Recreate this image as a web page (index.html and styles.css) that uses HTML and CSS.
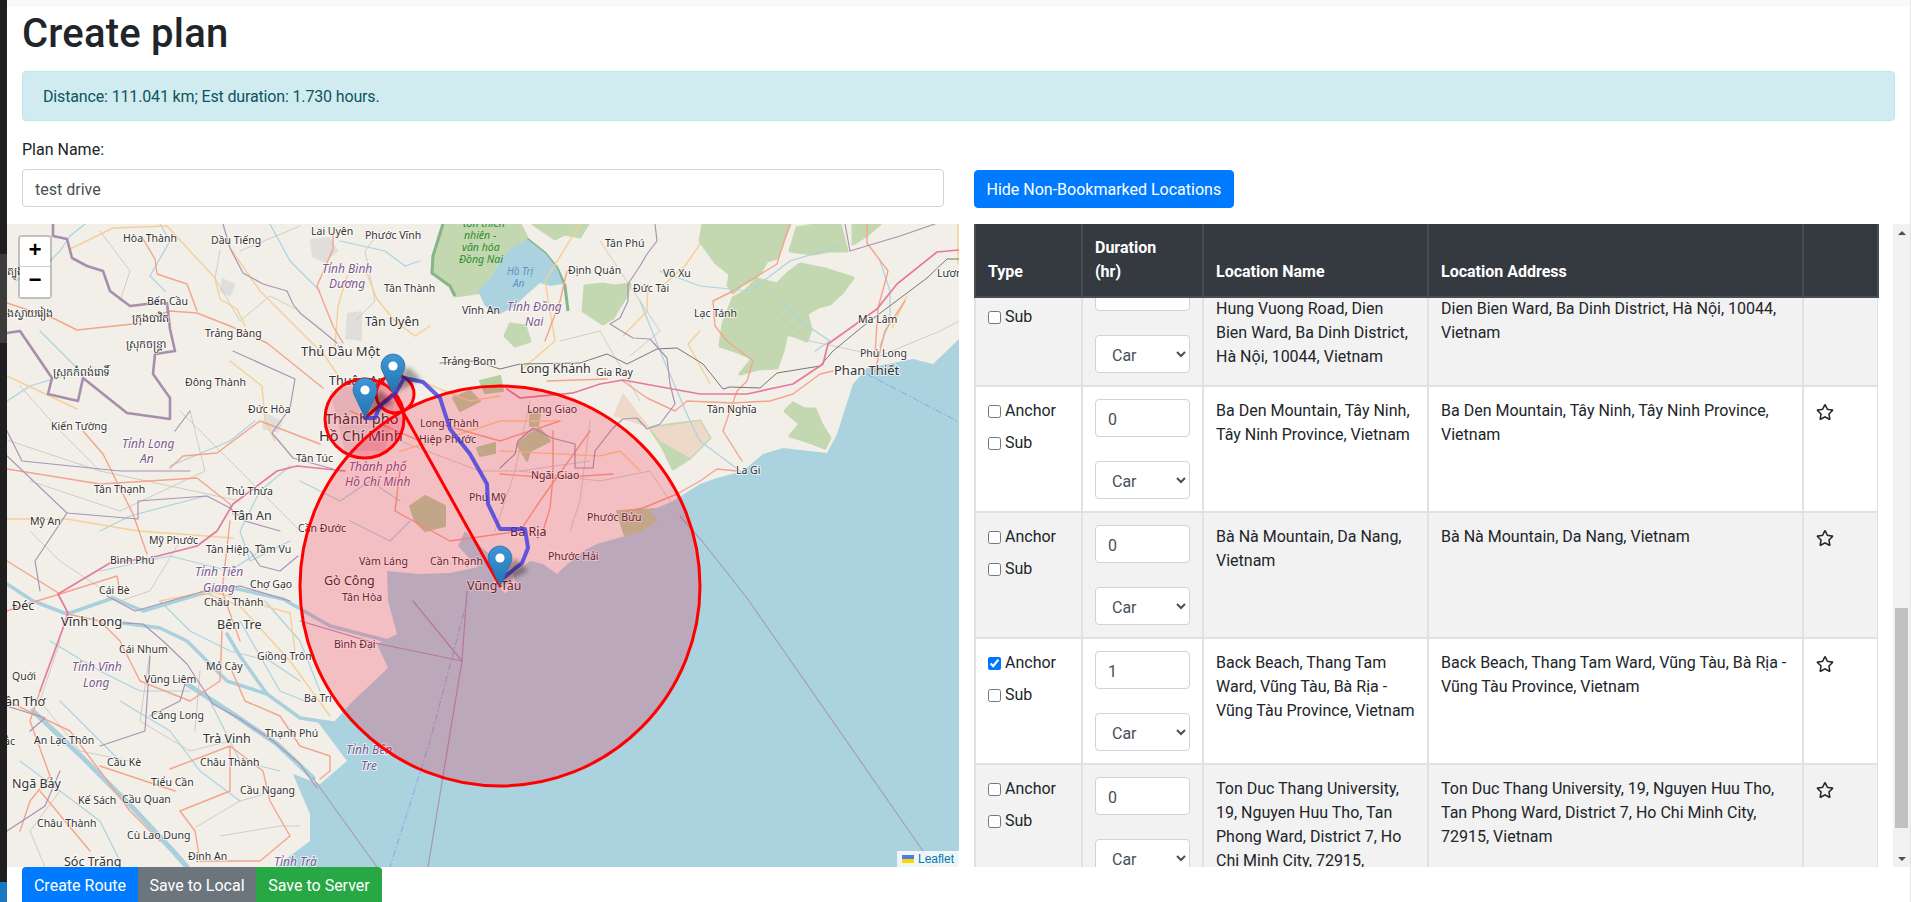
FILE: index.html
```html
<!DOCTYPE html>
<html lang="en">
<head>
<meta charset="utf-8">
<title>Create plan</title>
<link rel="stylesheet" href="styles.css">
</head>
<body>
<div class="app">
  <div class="edge">
    <div class="edge-a"></div>
    <div class="edge-b"></div>
    <div class="edge-c"></div>
    <div class="edge-d"></div>
  </div>
  <main class="page">
    <div class="topbar"></div>
    <section class="intro">
      <h1>Create plan</h1>
      <div class="alert">Distance: 111.041 km; Est duration: 1.730 hours.</div>
    </section>
    <section class="form-row">
      <div class="name-col">
        <label class="name-label" for="plan">Plan Name:</label>
        <input id="plan" class="control" type="text" value="test drive">
      </div>
      <div class="hide-col">
        <button class="btn btn-primary" type="button">Hide Non-Bookmarked Locations</button>
      </div>
    </section>
    <section class="work">
      <div class="map">
        <svg class="map-svg" viewBox="7 223 952 643" aria-label="Map">
          <defs>
            <linearGradient id="pin" x1="0" y1="0" x2="0" y2="1">
              <stop offset="0" stop-color="#3f97d6"/>
              <stop offset="1" stop-color="#2273b2"/>
            </linearGradient>
            <g id="marker">
              <path class="pin-body" d="M12.5 .6C5.9 .6 .6 5.9 .6 12.5c0 2.4 .8 4.6 1.9 6.5L12.5 40.4 22.5 19c1.1-1.9 1.9-4.1 1.9-6.5C24.4 5.9 19.1 .6 12.5 .6z"/>
              <circle class="pin-dot" cx="12.5" cy="12.5" r="4.6"/>
            </g>
          </defs>

          <rect class="land" x="7" y="223" width="952" height="643"/>

          <path class="forest" d="M703 223L790 223 784 238 777 257 767 260 760 272 753 278 742 284 733 292 728 284 730 273 716 262 700 240z"/>
          <path class="forest" d="M723 323L728 310 733 297 745 290 757 278 777 283 788 272 800 263 825 268 853 277 842 292 830 303 818 306 807 313 811 328 807 340 797 336 787 333 783 350 777 367 758 368 740 373 753 357 735 350 720 345z"/>
          <path class="forest" d="M797 227L820 223 840 223 847 250 830 250 813 253 790 250z"/>
          <path class="forest" d="M853 223L880 223 866 235 853 243z"/>
          <path class="forest" d="M533 223L588 223 580 236 565 233 555 238z"/>
          <path class="forest" d="M585 285L583 310 603 323 613 317 620 305 627 295 630 283 615 285 603 283z"/>
          <path class="forest" d="M785 410L793 402 805 408 815 408 822 424 830 437 825 447 812 442 800 438 790 435 800 423z"/>
          <path class="forest" d="M650 427L675 423 700 420 710 437 690 457 673 468 663 447z"/>
          <path class="forest" d="M443 223L433 255 432 272 450 285 455 295 490 290 495 265 507 250 527 237 520 223z"/>
          <path class="forest" d="M510 323L525 325 530 340 515 345 505 335z"/>
          <path class="forest-edge" d="M443 223L433 255 432 272 450 285 455 295"/>
          <path class="forest-edge" d="M527 238L545 252 557 267 565 285 568 310"/>
          <path class="hatch" d="M623 392L613 415 650 427 700 420 710 437 690 457 660 440z"/>
          <path class="lake" d="M527 238L545 252 557 267 563 283 550 285 540 282 525 295 515 305 500 313 485 305 478 290 490 278 500 260 510 248z"/>

          <path class="urban" d="M310 238L330 236 338 250 325 262 312 256z"/>
          <path class="urban" d="M222 277L236 283 230 296 220 290z"/>
          <path class="urban" d="M347 312L362 310 362 340 345 338z"/>
          <path class="urban" d="M265 412L283 420 278 432 262 428z"/>
          <path class="urban" d="M330 390L370 380 395 400 385 450 345 450z"/>

          <path class="scrub" d="M453 397L470 390 480 400 460 410z"/>
          <path class="scrub" d="M517 443L530 433 540 428 550 440 530 450 527 460z"/>
          <path class="scrub" d="M477 447L495 442 495 452 480 455z"/>
          <path class="scrub" d="M617 510L660 508 657 530 640 540 625 535z"/>
          <path class="scrub" d="M530 410L540 412 538 425 530 425z"/>
          <path class="scrub" d="M480 380L500 375 503 390 485 392z"/>
          <path class="scrub" d="M410 505L425 495 445 505 445 525 425 530 415 520z"/>

          <path class="sea" d="M959 338L933 363 913 358 867 367 853 383 837 433 827 452 783 447 763 453 743 470 717 477 700 483 673 500 650 510 657 520 643 530 597 543 583 550 563 567 557 573 543 563 530 560 513 573 517 585 505 592 495 582 492 555 480 545 465 530 458 545 470 558 478 566 450 572 420 573 387 570 388 600 397 633 377 643 388 667 353 700 333 722 317 720 347 760 320 783 293 773 300 790 310 813 310 840 283 860 277 866 959 866z"/>

          <path class="w-thick" d="M7 583L33 600 67 613 113 597 143 610 200 593 233 587 283 598 330 625 388 640"/>
          <path class="w-thick" d="M123 622L160 627 187 640 227 680 267 693 300 717 333 722"/>
          <path class="w-wide" d="M33 710L83 757 133 807 173 850 187 866"/>
          <path class="w-wide" d="M187 683L233 713 277 743 313 777"/>
          <path class="w-thick" d="M227 633L240 655 267 693"/>

          <path class="water" d="M85 223L70 235 60 250 40 270 15 280"/>
          <path class="water" d="M160 223L170 240 150 275 165 290"/>
          <path class="water" d="M270 223L290 260 315 285 320 290"/>
          <path class="water" d="M340 240L385 250 405 265 420 260"/>
          <path class="water" d="M40 330L80 370 30 385 7 400"/>
          <path class="water" d="M170 465L230 440 255 420"/>
          <path class="water" d="M205 495L130 515 100 530"/>
          <path class="water" d="M290 465L260 490 240 530 250 560 290 540"/>
          <path class="water" d="M100 570L170 555 230 570 260 550"/>
          <path class="water" d="M160 600L190 630 230 650 270 660 300 680"/>
          <path class="water" d="M50 640L100 670 140 690 190 690"/>
          <path class="water" d="M120 700L170 730 200 770 240 800"/>
          <path class="water" d="M20 760L60 790 100 820 120 860"/>
          <path class="water" d="M640 300L660 350 690 420 700 440 740 470"/>
          <path class="water" d="M780 300L800 320 830 340 815 350"/>
          <path class="water" d="M660 270L700 285 750 290 790 260 840 245"/>
          <path class="water" d="M880 260L890 290 890 320 880 345"/>
          <path class="water" d="M265 600L300 640 320 690"/>
          <path class="water" d="M240 620L280 690 305 700"/>
          <path class="water" d="M210 700L240 760 280 770"/>
          <path class="water" d="M60 700L120 760"/>
          <path class="water" d="M300 480L340 500 370 480 400 500"/>
          <path class="water" d="M350 520L390 540 410 520"/>

          <path class="minor" d="M7 439L100 470 240 500"/>
          <path class="minor" d="M30 480L120 510 205 470 190 410"/>
          <path class="minor" d="M180 410L240 470 300 530"/>
          <path class="minor" d="M20 385L60 430 100 470"/>
          <path class="minor" d="M240 250L300 225"/>
          <path class="minor" d="M220 250L215 277 240 320 270 295 300 310"/>
          <path class="minor" d="M100 230L130 270 120 300"/>
          <path class="minor" d="M380 230L365 250 375 300 355 320"/>
          <path class="minor" d="M180 540L150 590 120 600 60 560 30 530"/>
          <path class="minor" d="M60 640L40 700 80 750 130 760"/>
          <path class="minor" d="M150 650L140 720 190 750 230 740"/>
          <path class="minor" d="M200 670L195 730"/>
          <path class="minor" d="M60 790L30 830 45 866"/>
          <path class="minor" d="M196 826L240 800 275 790"/>
          <path class="minor" d="M220 835L280 825 300 825"/>
          <path class="minor" d="M600 240L640 300 660 330 630 355"/>
          <path class="minor" d="M760 300L810 340 880 355 940 330 959 320"/>
          <path class="minor" d="M560 340L600 330 640 400"/>
          <path class="minor" d="M400 440L480 470 520 470 590 460"/>
          <path class="minor" d="M530 400L515 470 495 530"/>
          <path class="minor" d="M590 420L580 500 570 530"/>
          <path class="minor" d="M520 470L600 480 650 470 670 500"/>

          <path class="road2" d="M7 375L77 408"/>
          <path class="road2" d="M70 248L113 227 167 225 215 277 220 298 237 308 245 325"/>
          <path class="road2" d="M7 518L67 518 138 530 233 537"/>
          <path class="road2" d="M347 275L338 305 335 345"/>
          <path class="road2" d="M367 273L377 298 395 320 415 335 430 325"/>
          <path class="road2" d="M230 360L262 385 265 420 275 440"/>
          <path class="road2" d="M230 247L260 290 290 320 325 355 345 385"/>
          <path class="road2" d="M160 600L210 590 290 612"/>
          <path class="road2" d="M200 590L240 605 290 660 330 715"/>
          <path class="road2" d="M290 612L295 650"/>
          <path class="road2" d="M580 223L545 280 555 340 520 370"/>
          <path class="road2" d="M700 243L685 265 660 287"/>
          <path class="road2" d="M700 330L688 343 707 377 710 383"/>
          <path class="road2" d="M623 335L647 310 648 283"/>
          <path class="road2" d="M892 327L907 295"/>
          <path class="road2" d="M958 223L958 263"/>
          <path class="road2" d="M400 450L470 430 500 420 560 420"/>
          <path class="road2" d="M500 450L600 455 620 450 640 470"/>
          <path class="road2" d="M420 380L470 400 500 395"/>

          <path class="road1" d="M7 302L55 318 77 329 133 323 170 310 197 312 230 325 267 342 277 350 323 387"/>
          <path class="road1" d="M143 238L155 258 157 273 187 283 197 310"/>
          <path class="road1" d="M333 232L333 248 317 285 333 325 343 342"/>
          <path class="road1" d="M170 467L183 455 217 452 260 420 320 443"/>
          <path class="road1" d="M7 468L100 483 197 477 230 503 233 513"/>
          <path class="road1" d="M83 430L103 453 133 513 147 553"/>
          <path class="road1" d="M230 520L222 590 240 640"/>
          <path class="road1" d="M7 560L60 593 20 605 7 610"/>
          <path class="road1" d="M60 593L117 575 120 590"/>
          <path class="road1" d="M67 613L100 620 120 640 140 680 190 700 220 680 222 630"/>
          <path class="road1" d="M7 700L70 730 100 770 130 810 160 840"/>
          <path class="road1" d="M100 765L130 775 175 790"/>
          <path class="road1" d="M170 768L230 745 230 790 180 810 195 830 200 860 260 860 290 835 270 800 263 770 230 745"/>
          <path class="road1" d="M40 690L30 720 50 775 30 800 20 830"/>
          <path class="road1" d="M40 790L90 850"/>
          <path class="road1" d="M232 670L245 700 280 715 300 745 330 755 330 770 320 778"/>
          <path class="road1" d="M430 420L500 440 560 420"/>
          <path class="road1" d="M500 473L553 477 613 473"/>
          <path class="road1" d="M553 430L553 477 550 507 543 530"/>
          <path class="road1" d="M507 388L520 397 573 392"/>
          <path class="road1" d="M547 380L607 378"/>
          <path class="road1" d="M567 270L560 300 545 340"/>
          <path class="road1" d="M790 223L780 253 777 263 733 290 713 300 715 325 727 340 753 360 747 380 737 390 723 430 742 460"/>
          <path class="road1" d="M833 370L820 373 793 393 770 400 733 402 687 400 675 410 647 397 623 380"/>
          <path class="road1" d="M737 470L717 468 700 480 677 493 643 507 627 510"/>
          <path class="road1" d="M867 223L867 242 888 270 878 307 875 353"/>
          <path class="road1" d="M905 300L885 330 875 370"/>
          <path class="road1" d="M590 430L540 500 520 530 450 540 395 510 400 470"/>
          <path class="road1" d="M350 410L420 440"/>

          <path class="rail" d="M959 258L947 258 927 277 867 322 833 350 820 365 777 372 760 387 730 386 723 388 703 363 677 347 657 348 647 353 627 363 607 353 580 362 520 363 500 368 475 360 440 362"/>

          <path class="trunk" d="M959 249L937 251 897 283 877 308 828 343 823 363 793 383 747 393 700 393 623 379 600 383 573 392 520 397 507 388"/>
          <path class="trunk" d="M345 470L297 465 277 470 233 503 217 530 197 545 150 557 110 562 58 593 68 612 63 627 40 690"/>

          <path class="bound" d="M53 223L53 235 67 238 72 257 87 265 103 270 110 290 130 305 147 303 167 302 170 328 175 350 155 353 153 373 170 397 170 418 127 412 83 377 78 400 48 393 52 377 20 330 7 332"/>
          <path class="bound-thin" d="M223 223L230 247 243 272 263 283 287 290 293 303 300 312 320 328 337 342"/>
          <path class="bound-thin" d="M233 350L295 378 290 407 272 432 293 457 333 468"/>
          <path class="bound-thin" d="M7 455L67 512 138 518 138 500 207 495 230 507 245 520 280 530"/>
          <path class="bound-thin" d="M67 512L35 560 40 590"/>
          <path class="bound-thin" d="M7 430L22 460 120 470 190 470"/>
          <path class="bound-thin" d="M175 430L190 410"/>
          <path class="bound-thin" d="M250 550L260 565 280 570 298 555"/>
          <path class="bound-thin" d="M7 705L45 717 30 730"/>
          <path class="bound-thin" d="M150 655L145 730 130 735 100 745"/>
          <path class="bound-thin" d="M185 683L180 700 150 715"/>
          <path class="bound-thin" d="M7 830L45 805 60 770"/>
          <path class="bound-thin" d="M107 595L135 610 170 600 205 590 240 585 290 600"/>
          <path class="bound-thin" d="M123 622L143 623 163 640 187 663 213 703 240 718 273 740 300 763 317 787"/>
          <path class="bound-thin" d="M655 223L657 240 647 253 640 265 628 283 628 300 620 317 610 323 633 337 650 338 667 357 670 383 675 403 660 423 647 428 637 417 623 418 613 427 595 450 593 467 575 467 575 443 552 437 533 427 518 440 515 453 500 467"/>
          <path class="bound-thin" d="M845 223L850 250 900 235 935 223"/>
          <path class="bound-thin" d="M375 642L462 660 413 600"/>
          <path class="bound-thin" d="M462 660L428 866"/>
          <path class="bound-thin" d="M467 590L462 660"/>
          <path class="bound-thin" d="M375 642L300 620"/>
          <path class="bound-sea" d="M313 777L377 866"/>
          <path class="bound-sea" d="M933 866L923 850 747 597 702 540 680 515"/>
          <path class="dash" d="M867 373L959 421"/>
          <path class="dash" d="M467 600L430 740 390 866"/>

          <text class="t" x="123" y="241">Hòa Thành</text>
          <text class="t" x="211" y="243">Dầu Tiếng</text>
          <text class="t" x="311" y="234">Lai Uyên</text>
          <text class="t" x="365" y="238">Phước Vĩnh</text>
          <text class="t" x="147" y="304">Bến Cầu</text>
          <text class="t" x="205" y="336">Trảng Bàng</text>
          <text class="t" x="384" y="291">Tân Thành</text>
          <text class="tm" x="365" y="325">Tân Uyên</text>
          <text class="t" x="462" y="313">Vĩnh An</text>
          <text class="p" x="322" y="272">Tỉnh Bình</text>
          <text class="p" x="329" y="287">Dương</text>
          <text class="g" x="463" y="226">tồn thiên</text>
          <text class="g" x="464" y="238">nhiên -</text>
          <text class="g" x="462" y="250">văn hóa</text>
          <text class="g" x="459" y="262">Đồng Nai</text>
          <text class="k" x="7" y="316">ងស្វាយរៀង</text>
          <text class="k" x="132" y="321">ក្រុងបាវិត</text>
          <text class="k" x="126" y="347">ស្រុកចន្ទ្រា</text>
          <text class="k" x="53" y="375">ស្រុកកំពង់រោទិ៍</text>
          <text class="k" x="7" y="274">ត្បូងឃ្មុំ</text>
          <text class="tl" x="301" y="355">Thủ Dầu Một</text>
          <text class="t" x="442" y="364">Trảng Bom</text>
          <text class="t" x="185" y="385">Đông Thành</text>
          <text class="tm" x="329" y="384">Thuận An</text>
          <text class="t" x="248" y="412">Đức Hòa</text>
          <text class="t" x="51" y="429">Kiến Tường</text>
          <text class="t" x="420" y="426">Long Thành</text>
          <text class="t" x="419" y="442">Hiệp Phước</text>
          <text class="tx" x="325" y="423">Thành phố</text>
          <text class="tx" x="319" y="440">Hồ Chí Minh</text>
          <text class="p" x="122" y="447">Tỉnh Long</text>
          <text class="p" x="140" y="462">An</text>
          <text class="t" x="296" y="461">Tân Túc</text>
          <text class="p" x="349" y="470">Thành phố</text>
          <text class="p" x="345" y="485">Hồ Chí Minh</text>
          <text class="t" x="94" y="492">Tân Thạnh</text>
          <text class="t" x="226" y="494">Thủ Thừa</text>
          <text class="t" x="469" y="500">Phú Mỹ</text>
          <text class="tm" x="232" y="519">Tân An</text>
          <text class="t" x="298" y="531">Cần Đước</text>
          <text class="t" x="30" y="524">Mỹ An</text>
          <text class="t" x="149" y="543">Mỹ Phước</text>
          <text class="t" x="206" y="552">Tân Hiệp</text>
          <text class="t" x="255" y="552">Tầm Vu</text>
          <text class="t" x="359" y="564">Vàm Láng</text>
          <text class="t" x="430" y="564">Cần Thạnh</text>
          <text class="t" x="110" y="563">Bình Phú</text>
          <text class="p" x="195" y="575">Tỉnh Tiền</text>
          <text class="p" x="203" y="591">Giang</text>
          <text class="t" x="250" y="587">Chợ Gạo</text>
          <text class="tm" x="324" y="584">Gò Công</text>
          <text class="tm" x="467" y="589">Vũng Tàu</text>
          <text class="t" x="342" y="600">Tân Hòa</text>
          <text class="t" x="99" y="593">Cái Bè</text>
          <text class="t" x="204" y="605">Châu Thành</text>
          <text class="tm" x="217" y="628">Bến Tre</text>
          <text class="tl" x="61" y="625">Vĩnh Long</text>
          <text class="tm" x="12" y="609">Đéc</text>
          <text class="t" x="119" y="652">Cái Nhum</text>
          <text class="t" x="206" y="669">Mỏ Cày</text>
          <text class="t" x="257" y="659">Giồng Trôm</text>
          <text class="p" x="72" y="670">Tỉnh Vĩnh</text>
          <text class="p" x="83" y="686">Long</text>
          <text class="t" x="12" y="679">Quới</text>
          <text class="t" x="144" y="682">Vũng Liêm</text>
          <text class="t" x="334" y="647">Bình Đại</text>
          <text class="t" x="304" y="701">Ba Tri</text>
          <text class="tm" x="-3" y="705">Cần Thơ</text>
          <text class="t" x="151" y="718">Càng Long</text>
          <text class="t" x="265" y="736">Thạnh Phú</text>
          <text class="tm" x="203" y="742">Trà Vinh</text>
          <text class="t" x="34" y="743">An Lạc Thôn</text>
          <text class="p" x="346" y="753">Tỉnh Bến</text>
          <text class="p" x="361" y="769">Tre</text>
          <text class="t" x="-1" y="744">Tắc</text>
          <text class="t" x="107" y="765">Cầu Kè</text>
          <text class="t" x="200" y="765">Châu Thành</text>
          <text class="t" x="151" y="785">Tiểu Cần</text>
          <text class="tm" x="12" y="787">Ngã Bảy</text>
          <text class="t" x="240" y="793">Cầu Ngang</text>
          <text class="t" x="78" y="803">Kế Sách</text>
          <text class="t" x="122" y="802">Cầu Quan</text>
          <text class="t" x="37" y="826">Châu Thành</text>
          <text class="t" x="127" y="838">Cù Lao Dung</text>
          <text class="t" x="188" y="859">Định An</text>
          <text class="tm" x="64" y="865">Sóc Trăng</text>
          <text class="p" x="274" y="865">Tỉnh Trà</text>
          <text class="t" x="605" y="246">Tân Phú</text>
          <text class="t" x="568" y="273">Định Quán</text>
          <text class="t" x="663" y="276">Võ Xu</text>
          <text class="t" x="633" y="291">Đức Tài</text>
          <text class="wl" x="507" y="274">Hồ Trị</text>
          <text class="wl" x="513" y="286">An</text>
          <text class="p" x="507" y="310">Tỉnh Đồng</text>
          <text class="p" x="525" y="325">Nai</text>
          <text class="t" x="694" y="316">Lạc Tánh</text>
          <text class="t" x="937" y="276">Lương Sơn</text>
          <text class="t" x="858" y="322">Ma Lâm</text>
          <text class="t" x="860" y="356">Phú Long</text>
          <text class="tm" x="520" y="372">Long Khánh</text>
          <text class="t" x="596" y="375">Gia Ray</text>
          <text class="tl" x="834" y="374">Phan Thiết</text>
          <text class="t" x="707" y="412">Tân Nghĩa</text>
          <text class="t" x="527" y="412">Long Giao</text>
          <text class="t" x="531" y="478">Ngãi Giao</text>
          <text class="t" x="736" y="473">La Gi</text>
          <text class="t" x="587" y="520">Phước Bửu</text>
          <text class="tm" x="510" y="535">Bà Rịa</text>
          <text class="t" x="548" y="559">Phước Hải</text>

          <circle class="zone" cx="500" cy="585" r="200"/>
          <circle class="zone" cx="364.500" cy="417.500" r="39.500"/>
          <circle class="zone" cx="395" cy="393" r="19"/>
          <path class="link" d="M365 417L393 393 500 585"/>
          <path class="route" d="M365 417L375 417 380 405 395 393 404 377 423 381 440 397 450 428 470 453 487 483 488 503 500 528 525 528 528 547 522 562 502 578"/>

          <path class="pin-shadow" d="M500 585L528 570 516 558 507 563z"/>
          <path class="pin-shadow" d="M393 393L421 378 409 366 400 371z"/>
          <path class="pin-shadow" d="M365 417L393 402 381 390 372 395z"/>
          <use href="#marker" x="352.500" y="376.500"/>
          <use href="#marker" x="380.500" y="352.500"/>
          <use href="#marker" x="487.500" y="544.500"/>
        </svg>
        <div class="zoom">
          <button class="zoom-btn zoom-in" type="button">+</button>
          <button class="zoom-btn" type="button">−</button>
        </div>
        <div class="attribution">
          <svg class="flag" viewBox="0 0 12 8" aria-hidden="true">
            <rect class="flag-blue" width="12" height="4"/>
            <rect class="flag-yellow" y="4" width="12" height="4"/>
          </svg>
          <a href="#">Leaflet</a>
        </div>
      </div>

      <div class="side">
        <div class="tables">
          <table class="grid grid-head">
            <colgroup><col class="c1"><col class="c2"><col class="c3"><col class="c4"><col class="c5"></colgroup>
            <thead>
              <tr>
                <th>Type</th>
                <th>Duration<br>(hr)</th>
                <th>Location Name</th>
                <th>Location Address</th>
                <th></th>
              </tr>
            </thead>
          </table>
          <div class="rows">
            <table class="grid grid-body">
              <colgroup><col class="c1"><col class="c2"><col class="c3"><col class="c4"><col class="c5"></colgroup>
              <tbody>
                <tr class="shade">
                  <td>
                    <div class="under-head-check"></div>
                    <label class="check"><input type="checkbox">Sub</label>
                  </td>
                  <td>
                    <input class="control num" type="text">
                    <select class="control pick"><option>Car</option></select>
                  </td>
                  <td><div class="under-head-line"></div>Hung Vuong Road, Dien Bien Ward, Ba Dinh District, Hà Nội, 10044, Vietnam</td>
                  <td><div class="under-head-line"></div>Dien Bien Ward, Ba Dinh District, Hà Nội, 10044, Vietnam</td>
                  <td></td>
                </tr>
                <tr>
                  <td>
                    <label class="check"><input type="checkbox">Anchor</label>
                    <label class="check"><input type="checkbox">Sub</label>
                  </td>
                  <td>
                    <input class="control num" type="text" value="0">
                    <select class="control pick"><option>Car</option></select>
                  </td>
                  <td>Ba Den Mountain, Tây Ninh, Tây Ninh Province, Vietnam</td>
                  <td>Ba Den Mountain, Tây Ninh, Tây Ninh Province, Vietnam</td>
                  <td><svg class="star" viewBox="0 0 576 512"><use href="#star-shape"/></svg></td>
                </tr>
                <tr class="shade">
                  <td>
                    <label class="check"><input type="checkbox">Anchor</label>
                    <label class="check"><input type="checkbox">Sub</label>
                  </td>
                  <td>
                    <input class="control num" type="text" value="0">
                    <select class="control pick"><option>Car</option></select>
                  </td>
                  <td>Bà Nà Mountain, Da Nang, Vietnam</td>
                  <td>Bà Nà Mountain, Da Nang, Vietnam</td>
                  <td><svg class="star" viewBox="0 0 576 512"><use href="#star-shape"/></svg></td>
                </tr>
                <tr>
                  <td>
                    <label class="check"><input type="checkbox" checked>Anchor</label>
                    <label class="check"><input type="checkbox">Sub</label>
                  </td>
                  <td>
                    <input class="control num" type="text" value="1">
                    <select class="control pick"><option>Car</option></select>
                  </td>
                  <td>Back Beach, Thang Tam Ward, Vũng Tàu, Bà Rịa - Vũng Tàu Province, Vietnam</td>
                  <td>Back Beach, Thang Tam Ward, Vũng Tàu, Bà Rịa - Vũng Tàu Province, Vietnam</td>
                  <td><svg class="star" viewBox="0 0 576 512"><use href="#star-shape"/></svg></td>
                </tr>
                <tr class="shade">
                  <td>
                    <label class="check"><input type="checkbox">Anchor</label>
                    <label class="check"><input type="checkbox">Sub</label>
                  </td>
                  <td>
                    <input class="control num" type="text" value="0">
                    <select class="control pick"><option>Car</option></select>
                  </td>
                  <td>Ton Duc Thang University, 19, Nguyen Huu Tho, Tan Phong Ward, District 7, Ho Chi Minh City, 72915,</td>
                  <td>Ton Duc Thang University, 19, Nguyen Huu Tho, Tan Phong Ward, District 7, Ho Chi Minh City, 72915, Vietnam</td>
                  <td><svg class="star" viewBox="0 0 576 512"><use href="#star-shape"/></svg></td>
                </tr>
              </tbody>
            </table>
          </div>
        </div>
        <div class="scrollbar">
          <div class="arrow arrow-up"></div>
          <div class="track"><div class="thumb"></div></div>
          <div class="arrow arrow-down"></div>
        </div>
      </div>
    </section>
    <div class="actions">
      <button class="btn-act act-blue" type="button">Create Route</button>
      <button class="btn-act act-grey" type="button">Save to Local</button>
      <button class="btn-act act-green" type="button">Save to Server</button>
    </div>
  </main>
</div>
<svg class="sprite" aria-hidden="true">
  <defs>
    <path id="star-shape" d="M528.100 171.500L382 150.200 316.700 17.800c-11.700-23.600-45.600-23.900-57.400 0L194 150.200 47.900 171.500c-26.200 3.800-36.700 36.100-17.700 54.600l105.700 103-25 145.500c-4.500 26.300 23.200 46 46.400 33.700L288 439.600l130.700 68.700c23.200 12.200 50.900-7.400 46.400-33.700l-25-145.500 105.700-103c19-18.500 8.500-50.800-17.700-54.600zM388.600 312.300l23.700 138.400L288 385.400l-124.300 65.300 23.700-138.400-100.600-98 139-20.200 62.200-126 62.200 126 139 20.200-100.600 98z"/>
  </defs>
</svg>
</body>
</html>
```

FILE: styles.css
```css
* { box-sizing: border-box; }
html, body { margin: 0; height: 100%; overflow: hidden; background: #fff; }
body { font: 16px/24px Roboto, "Liberation Sans", sans-serif; color: #212529; }

.app { display: flex; height: 902px; border-right: 1px solid #e4e4e4; }

.edge { width: 7px; flex: none; display: flex; flex-direction: column; background: #1f1f1f; }
.edge-a { height: 254px; }
.edge-b { height: 89px; background: #3c3c3c; }
.edge-c { flex: 1; }
.edge-d { height: 20px; background: #1a78c2; }

.page { flex: 1; min-width: 0; display: flex; flex-direction: column; }
.topbar { height: 7px; background: #f8f9fa; flex: none; }

.intro { padding: 3px 15px 0; }
h1 { margin: 0 0 13px; font-size: 40px; line-height: 48px; font-weight: 500; letter-spacing: .22px; }
.alert { height: 50px; padding: 13px 20px 11px; background: #d1ecf1; border: 1px solid #bee5eb; border-radius: 4px; color: #0c5460; letter-spacing: -.15px; }

.form-row { display: flex; padding-top: 17px; }
.name-col { width: 951.500px; padding: 0 15px; }
.name-label { display: block; margin-bottom: 7px; }
.hide-col { flex: 1; padding: 32px 15px 0; }
.control { display: block; width: 100%; height: 38px; padding: 7px 12px 5px; font: inherit; color: #495057; background: #fff; border: 1px solid #ced4da; border-radius: 4px; }

.btn { height: 38px; padding: 7px 12px 5px; font: inherit; border: 1px solid transparent; border-radius: 4px; color: #fff; }
.btn-primary { background: #007bff; border-color: #007bff; }

.work { display: flex; height: 643px; margin-top: 16px; flex: none; }
.map { position: relative; width: 952px; flex: none; overflow: hidden; background: #f2efe9; }
.map-svg { display: block; width: 952px; height: 643px; }

.land { fill: #f2efe9; }
.sea { fill: #aad3df; }
.forest { fill: #c3d8b0; stroke: #c3d8b0; stroke-width: 3; stroke-linejoin: round; }
.forest-edge { fill: none; stroke: #86b58a; stroke-width: 3; }
.lake { fill: #aad3df; }
.hatch { fill: #eed9c8; }
.urban { fill: #e0deda; }
.scrub { fill: #b5d0a0; stroke: #b5d0a0; stroke-width: 2; stroke-linejoin: round; }
path.water, path.w-thick, path.w-wide, path.minor, path.road1, path.road2, path.rail, path.trunk, path.bound, path.bound-thin, path.bound-sea, path.dash, path.link, path.route { fill: none; stroke-linejoin: round; stroke-linecap: round; }
.water { stroke: #aad3df; stroke-width: 1.2; }
.w-thick { stroke: #a9d0dc; stroke-width: 3.5; }
.w-wide { stroke: #a9d0dc; stroke-width: 5; }
.minor { stroke: #c6c3be; stroke-width: .8; }
.road1 { stroke: #f4a48c; stroke-width: 1.4; }
.road2 { stroke: #f6cf96; stroke-width: 1.4; }
.rail { stroke: #777; stroke-width: 1; }
.trunk { stroke: #e7799a; stroke-width: 1.7; }
.bound { stroke: #a78fab; stroke-width: 2.6; }
.bound-thin { stroke: #a994b4; stroke-width: 1.2; }
.bound-sea { stroke: #a5a0b8; stroke-width: 1.2; }
.dash { stroke: #8da4e2; stroke-width: 1; stroke-dasharray: 6 3 1 3; }

.map-svg text { font-family: "Noto Sans", sans-serif; fill: #333; paint-order: stroke; stroke: rgba(255, 255, 255, .65); stroke-width: 2px; }
.t { font-size: 10.5px; }
.tm { font-size: 12.5px; }
.tl { font-size: 13px; }
.tx { font-size: 14.500px; }
.k { font-size: 11px; font-family: "Noto Sans", sans-serif; }
.map-svg .p { font-size: 12px; font-style: italic; fill: #7d5a8e; }
.map-svg .g { font-size: 10.5px; font-style: italic; fill: #2c8c2c; stroke: none; }
.map-svg .wl { font-size: 10px; font-style: italic; fill: #5f8fc4; stroke: none; }

.zone { fill: #ff0028; fill-opacity: .2; stroke: #f00; stroke-width: 3; }
.link { stroke: #f00; stroke-width: 3; }
.route { stroke: #3232e0; stroke-opacity: .75; stroke-width: 4; }
.pin-shadow { fill: rgba(0, 0, 0, .32); filter: blur(2px); }
.pin-body { fill: url(#pin); stroke: #2a6ea3; stroke-width: .8; }
.pin-dot { fill: #fff; }

.zoom { position: absolute; left: 11px; top: 11px; display: flex; flex-direction: column; border: 2px solid rgba(0, 0, 0, .2); border-radius: 4px; }
.zoom-btn { width: 30px; height: 30px; padding: 0; border: 0; background: #fff; font: bold 22px/30px "Liberation Mono", monospace; color: #000; }
.zoom-in { border-bottom: 1px solid #ccc; border-radius: 2px 2px 0 0; }
.attribution { position: absolute; right: 0; bottom: 0; height: 16px; padding: 0 5px; display: flex; align-items: center; gap: 4px; background: rgba(255, 255, 255, .8); font: 12px/16px "Liberation Sans", sans-serif; }
.attribution a { color: #0078a8; text-decoration: none; }
.flag { width: 12px; height: 8px; display: block; }
.flag-blue { fill: #4c7be1; }
.flag-yellow { fill: #ffd500; }

.side { flex: 1; min-width: 0; display: flex; padding-left: 15px; }
.tables { width: 903.500px; flex: none; display: flex; flex-direction: column; }
.rows { flex: 1; min-height: 0; overflow: hidden; }
.grid { width: 100%; table-layout: fixed; border-collapse: collapse; }
.c1 { width: 107px; }
.c2 { width: 121px; }
.c3 { width: 225px; }
.c4 { width: 375px; }
.c5 { width: 75px; }
.grid th, .grid td { padding: 12px; border: 2px solid #dee2e6; vertical-align: top; text-align: left; }
.grid th { vertical-align: bottom; background: #343a40; border-color: #454d55; border-top: 0; color: #fff; font-weight: 700; }
.grid-body { margin-top: -39px; }
.grid-body td { height: 126px; }
.shade td { background: #f2f2f2; }
.grid-head { position: relative; z-index: 1; }
.under-head-check { height: 32px; }
.under-head-line { height: 24px; }

.check { display: flex; align-items: center; height: 24px; margin-bottom: 8px; }
.check input { width: 13px; height: 13px; margin: 0 4px 0 0; }
.num { margin-bottom: 24px; }
.pick { padding-right: 4px; }
.star { display: block; width: 18px; height: 16px; margin-top: 5px; fill: #212529; }
.sprite { position: absolute; width: 0; height: 0; }

.scrollbar { width: 17px; margin-left: 15.500px; flex: none; display: flex; flex-direction: column; background: #f1f1f1; }
.arrow { height: 17px; flex: none; display: flex; align-items: center; justify-content: center; }
.arrow::before { content: ""; border-left: 4px solid transparent; border-right: 4px solid transparent; }
.arrow-up::before { border-bottom: 4px solid #505050; }
.arrow-down::before { border-top: 4px solid #505050; }
.track { flex: 1; padding: 367px 2px 0; }
.thumb { height: 220px; background: #c1c1c1; }

.actions { display: flex; padding-left: 15px; flex: none; }
.btn-act { height: 38px; padding: 6px 0; font: inherit; color: #fff; border: 1px solid transparent; }
.act-blue { width: 116px; background: #007bff; border-radius: 4px 0 0 4px; }
.act-grey { width: 118px; background: #6c757d; }
.act-green { width: 126px; background: #28a745; border-radius: 0 4px 4px 0; }
```
